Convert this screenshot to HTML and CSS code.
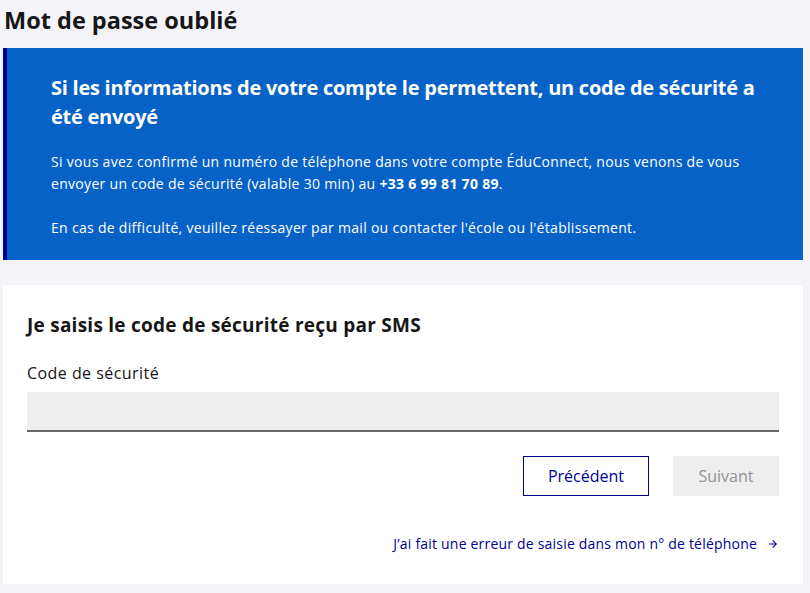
FILE: index.html
```html
<!DOCTYPE html>
<html lang="fr">
<head>
    <meta charset="UTF-8">
    <meta name="viewport" content="width=device-width, initial-scale=1.0">
    <title>Mot de passe oublié</title>
    <link rel="stylesheet" href="styles.css">
</head>
<body>
    <div class="page">
        <h1 class="page-title">Mot de passe oublié</h1>

        <div class="notice">
            <h2>Si les informations de votre compte le permettent, un code de sécurité a été envoyé</h2>
            <p>Si vous avez confirmé un numéro de téléphone dans votre compte ÉduConnect, nous venons de vous envoyer un code de sécurité (valable 30 min) au <strong>+33 6 99 81 70 89</strong>.</p>
            <p>En cas de difficulté, veuillez réessayer par mail ou contacter l'école ou l'établissement.</p>
        </div>

        <form class="card" id="codeForm">
            <h3>Je saisis le code de sécurité reçu par SMS</h3>

            <label for="code">Code de sécurité</label>
            <input type="text" id="code" autocomplete="one-time-code">

            <div class="button-group">
                <button type="button" class="btn-secondary">Précédent</button>
                <button type="submit" class="btn-primary" disabled>Suivant</button>
            </div>

            <div class="link-row">
                <a href="#" class="arrow-link">J’ai fait une erreur de saisie dans mon n° de téléphone
                    <svg width="12" height="12" viewBox="0 0 24 24" aria-hidden="true"><path d="M16.17 13l-5.36 5.36 1.41 1.41L20 12l-7.78-7.78-1.41 1.41L16.17 11H4v2z" fill="currentColor"/></svg>
                </a>
            </div>
        </form>
    </div>
</body>
</html>
```

FILE: styles.css
```css
body {
    margin: 0;
    padding: 0;
    background-color: #f3f3f8;
    font-family: 'Open Sans', Lato, sans-serif;
    color: #1e1e1e;
}

.page {
    margin: 0 7px 0 3px;
}

.page-title {
    margin: 0;
    padding: 4px 0 0 1px;
    font-size: 23.5px;
    line-height: 32px;
    font-weight: 700;
    color: #161616;
}

.notice {
    margin-top: 12px;
    background-color: #0762c8;
    border-left: 4px solid #000091;
    padding: 25px 40px 21px 44px;
    color: #fff;
}

.notice h2 {
    margin: 0 0 20px;
    font-size: 20px;
    line-height: 29px;
    font-weight: 700;
    letter-spacing: -0.25px;
}

.notice p {
    margin: 0 0 22px;
    font-size: 14px;
    line-height: 22px;
    letter-spacing: 0.3px;
}

.notice p:last-child {
    margin-bottom: 0;
}

.card {
    margin-top: 25px;
    background-color: #fff;
    padding: 26px 24px 28px;
}

.card h3 {
    margin: 0 0 22px;
    font-size: 19px;
    line-height: 28px;
    font-weight: 700;
    letter-spacing: 0.25px;
    color: #161616;
}

label {
    display: block;
    font-size: 16px;
    line-height: 24px;
    margin-bottom: 7px;
    letter-spacing: 0.45px;
    color: #161616;
}

input[type="text"] {
    display: block;
    box-sizing: border-box;
    width: 100%;
    height: 40px;
    border: none;
    border-bottom: 2px solid #666;
    background-color: #eee;
    border-radius: 0;
    padding: 8px 16px;
    font-size: 16px;
    font-family: inherit;
}

input[type="text"]:focus {
    outline: 2px solid #0a76f6;
    outline-offset: 2px;
}

.button-group {
    display: flex;
    justify-content: flex-end;
    gap: 24px;
    margin-top: 24px;
}

button {
    height: 40px;
    padding: 0 24px;
    font-size: 16px;
    font-family: inherit;
    border-radius: 0;
    cursor: pointer;
}

.btn-secondary {
    background-color: #fff;
    color: #000091;
    border: 1px solid #000091;
}

.btn-secondary:hover {
    background-color: #f6f6f6;
}

.btn-primary {
    padding: 0 25.5px;
    background-color: #000091;
    color: #fff;
    border: none;
}

.btn-primary:disabled {
    background-color: #eee;
    color: #929292;
    cursor: not-allowed;
}

.link-row {
    display: flex;
    justify-content: flex-end;
    margin-top: 36px;
}

.arrow-link {
    display: inline-flex;
    align-items: center;
    gap: 10px;
    font-size: 14px;
    line-height: 24px;
    letter-spacing: 0.2px;
    color: #000091;
    text-decoration: none;
}

.arrow-link:hover {
    text-decoration: underline;
}
```
